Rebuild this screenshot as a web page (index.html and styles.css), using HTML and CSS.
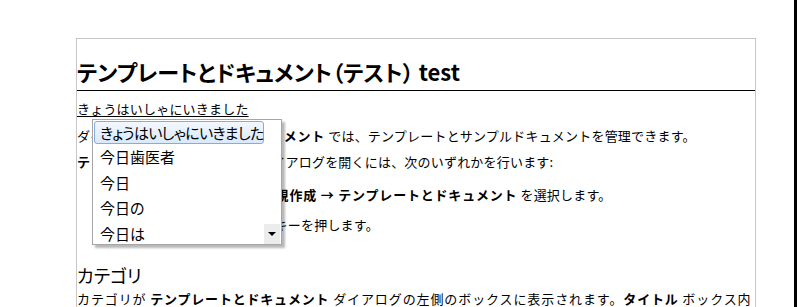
FILE: index.html
```html
<!DOCTYPE html>
<html lang="ja">
  <head>
    <meta charset="UTF-8" />
    <meta name="viewport" content="width=device-width, initial-scale=1.0" />
    <link rel="stylesheet" href="styles.css">
  </head>
  <body>
    <div class="screen">
      <div class="viewport">
        <div class="doc">
          <h1 class="title">テンプレートとドキュメント（テスト） test</h1>
          <p class="ime">きょうはいしゃにいきました</p>
          <p class="p2">ダイアログ <b>テンプレートとドキュメント</b> では、テンプレートとサンプルドキュメントを管理できます。</p>
          <p class="p3"><b>テンプレートとドキュメント</b> ダイアログを開くには、次のいずれかを行います:</p>
          <ul class="steps">
            <li>メニューから <b>ファイル → 新規作成 → テンプレートとドキュメント</b> を選択します。</li>
            <li>Shift+Ctrl+N ショートカットキーを押します。</li>
          </ul>
          <h2 class="sub">カテゴリ</h2>
          <p class="p4">カテゴリが <b>テンプレートとドキュメント</b> ダイアログの左側のボックスに表示されます。<b>タイトル</b> ボックス内</p>
        </div>

        <div class="candidates">
          <div class="cand selected">きょうはいしゃにいきました</div>
          <div class="cand">今日歯医者</div>
          <div class="cand">今日</div>
          <div class="cand">今日の</div>
          <div class="cand">今日は</div>
          <div class="more"><span></span></div>
        </div>
      </div>
      <div class="edge"></div>
    </div>
  </body>
</html>
```

FILE: styles.css
```css
body {
  margin: 0;
  background: #fff;
  color: #000;
  font-family: "Noto Sans CJK JP", "Liberation Sans", sans-serif;
  font-size: 13px;
  overflow: hidden;
}

.screen {
  display: flex;
  height: 100vh;
}

.viewport {
  position: relative;
  flex: 1;
  overflow: hidden;
}

.edge {
  width: 3px;
  background: #000;
}

.doc {
  width: 678px;
  margin: 38px 0 0 76px;
  border: 1px solid #c6c6c6;
  border-bottom: none;
  height: 300px;
}

.title {
  margin: 0;
  padding: 17px 0 4px;
  font-size: 22px;
  line-height: 30px;
  font-weight: bold;
  font-feature-settings: "palt";
  border-bottom: 1px solid #000;
}

.doc p,
.steps li {
  margin: 0;
  line-height: 20px;
  letter-spacing: 0.2px;
  white-space: nowrap;
}

.doc b {
  letter-spacing: 0.8px;
}

.ime {
  padding-top: 8px;
  text-decoration: underline;
  text-underline-offset: 2px;
}

.p2 {
  padding-top: 7px;
}

.p3 {
  padding-top: 6px;
}

.steps {
  margin: 0;
  padding: 0 0 0 26px;
  list-style: none;
}

.steps li {
  padding-top: 13px;
}

.steps li + li {
  padding-top: 10px;
}

.sub {
  margin: 0;
  padding-top: 27px;
  font-size: 18px;
  line-height: 26px;
  font-weight: normal;
  font-feature-settings: "palt";
}

.doc .p4 {
  padding-top: 1px;
  letter-spacing: 0.9px;
  overflow: hidden;
}

.candidates {
  position: absolute;
  left: 92px;
  top: 119px;
  width: 190px;
  height: 126px;
  padding-top: 1px;
  box-sizing: border-box;
  border: 1px solid #a6a6a6;
  background: #fff;
  box-shadow: 3px 3px 2px rgba(0, 0, 0, 0.28);
  overflow: hidden;
  font-size: 15px;
  font-feature-settings: "palt";
}

.cand {
  height: 25.5px;
  line-height: 25.5px;
  padding-left: 7px;
  white-space: nowrap;
}

.cand.selected {
  width: 170px;
  height: 23px;
  line-height: 21px;
  margin-left: 1px;
  padding-left: 5px;
  box-sizing: border-box;
  border: 1px solid #84acdd;
  border-radius: 3px;
  background: linear-gradient(#f3f8fe, #d9e9fc);
  letter-spacing: -0.7px;
}

.more {
  position: absolute;
  right: 1px;
  bottom: 0;
  width: 16px;
  height: 20px;
  background: #ececec;
  display: flex;
  align-items: center;
  justify-content: center;
}

.more span {
  width: 0;
  height: 0;
  border-left: 4px solid transparent;
  border-right: 4px solid transparent;
  border-top: 4px solid #000;
}
```
